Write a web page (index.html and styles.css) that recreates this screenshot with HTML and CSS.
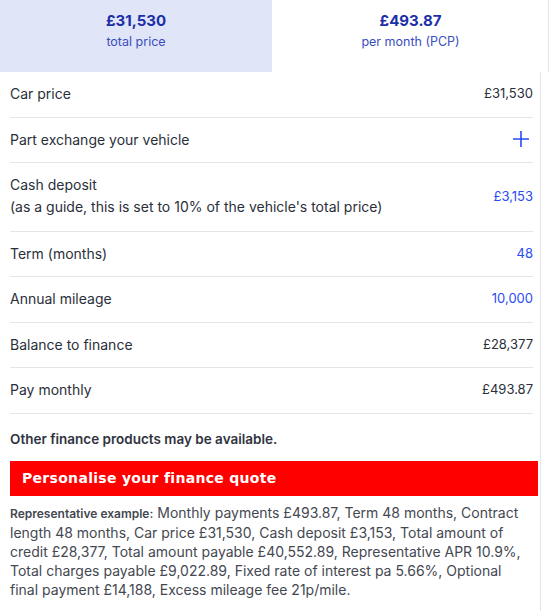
FILE: index.html
```html
<!DOCTYPE html>
<html lang="en">
<head>
<meta charset="utf-8">
<title>Finance quote</title>
<link rel="stylesheet" href="styles.css">
</head>
<body>
<div class="page">
  <div class="tabs">
    <div class="tab tab-active">
      <div class="tab-amount">£31,530</div>
      <div class="tab-label">total price</div>
    </div>
    <div class="tab">
      <div class="tab-amount">£493.87</div>
      <div class="tab-label">per month (PCP)</div>
    </div>
  </div>
  <div class="content">
    <div class="rows">
      <div class="row">
        <div class="label">Car price</div>
        <div class="value">£31,530</div>
      </div>
      <div class="row">
        <div class="label">Part exchange your vehicle</div>
        <svg class="plus" width="18" height="18" viewBox="0 0 18 18" aria-hidden="true"><path d="M9 1v16M1 9h16" stroke="#2a4bf5" stroke-width="1.6" fill="none"/></svg>
      </div>
      <div class="row row-tall">
        <div class="label">Cash deposit<br>(as a guide, this is set to 10% of the vehicle's total price)</div>
        <div class="value blue">£3,153</div>
      </div>
      <div class="row">
        <div class="label">Term (months)</div>
        <div class="value blue">48</div>
      </div>
      <div class="row">
        <div class="label">Annual mileage</div>
        <div class="value blue">10,000</div>
      </div>
      <div class="row">
        <div class="label">Balance to finance</div>
        <div class="value">£28,377</div>
      </div>
      <div class="row">
        <div class="label">Pay monthly</div>
        <div class="value">£493.87</div>
      </div>
    </div>
    <p class="other">Other finance products may be available.</p>
    <div class="cta">Personalise your finance quote</div>
    <p class="rep"><span class="rep-title">Representative example:</span> Monthly payments £493.87, Term 48 months, Contract length 48 months, Car price £31,530, Cash deposit £3,153, Total amount of credit £28,377, Total amount payable £40,552.89, Representative APR 10.9%, Total charges payable £9,022.89, Fixed rate of interest pa 5.66%, Optional final payment £14,188, Excess mileage fee 21p/mile.</p>
  </div>
</div>
</body>
</html>
```
FILE: styles.css
```css
html, body {
  margin: 0;
  padding: 0;
  background: #ffffff;
}
body {
  font-family: "Inter", "Noto Sans", sans-serif;
  color: #2b2f3a;
  width: 549px;
  height: 611px;
  overflow: hidden;
}
.page {
  width: 549px;
}
.tabs {
  display: flex;
  height: 72px;
  border-right: 1px solid #e4e4e8;
}
.tab {
  flex: 0 0 277px;
  display: flex;
  flex-direction: column;
  align-items: center;
  padding-top: 11px;
  box-sizing: border-box;
}
.tab-active {
  flex: 0 0 272px;
  background: #e0e5f7;
}
.tab-amount {
  font-size: 15px;
  font-weight: 700;
  color: #1d2fa8;
  line-height: 20px;
}
.tab-label {
  font-size: 12.5px;
  color: #3a4ec0;
  line-height: 20px;
  margin-top: 1px;
}
.content {
  width: 541px;
  border-right: 1px solid #e4e4e8;
  padding: 0 0 20px 10px;
  box-sizing: border-box;
}
.rows {
  width: 523px;
}
.row {
  display: flex;
  align-items: center;
  justify-content: space-between;
  padding: 11px 0 12.5px 0;
  border-bottom: 1px solid #e6e6e9;
  font-size: 14px;
  line-height: 21px;
}
.row-tall {
  line-height: 22px;
}
.value {
  color: #2b2f3a;
  font-size: 13px;
}
.blue {
  color: #2a4bf5;
}
.plus {
  display: block;
  margin-right: 3px;
}
.other {
  margin: 15px 0 0 0;
  font-size: 13.5px;
  font-weight: 600;
  line-height: 20px;
  color: #2f3340;
}
.cta {
  margin-top: 12px;
  width: 528px;
  height: 35px;
  background: #ff0000;
  color: #ffffff;
  font-family: "DejaVu Sans", Verdana, sans-serif;
  font-weight: 700;
  font-size: 14px;
  letter-spacing: 0.3px;
  line-height: 35px;
  padding-left: 12px;
  box-sizing: border-box;
}
.rep {
  margin: 7px 0 0 0;
  font-size: 14px;
  line-height: 19px;
  color: #444851;
  width: 515px;
}
.rep-title {
  font-weight: 600;
  font-size: 12px;
}
```
